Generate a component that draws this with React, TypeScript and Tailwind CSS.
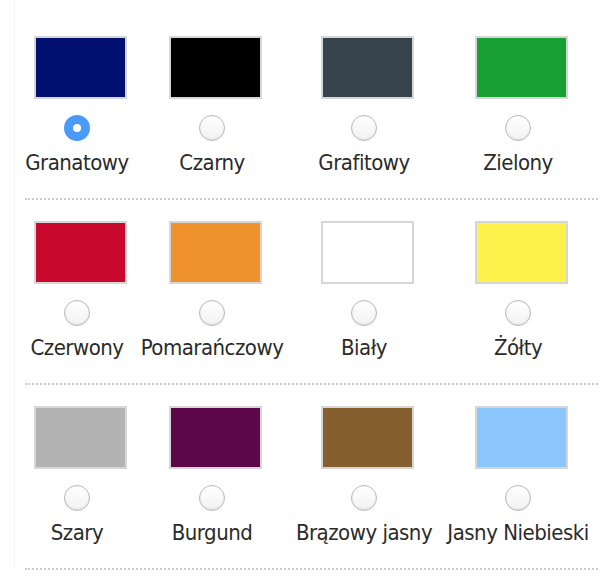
import React from 'react';

interface ColorOption {
  name: string;
  hex: string;
}

const rows: ColorOption[][] = [
  [
    { name: 'Granatowy', hex: '#021070' },
    { name: 'Czarny', hex: '#000000' },
    { name: 'Grafitowy', hex: '#36434d' },
    { name: 'Zielony', hex: '#19a035' },
  ],
  [
    { name: 'Czerwony', hex: '#c8092d' },
    { name: 'Pomarańczowy', hex: '#f0922b' },
    { name: 'Biały', hex: '#ffffff' },
    { name: 'Żółty', hex: '#fff14c' },
  ],
  [
    { name: 'Szary', hex: '#b3b3b3' },
    { name: 'Burgund', hex: '#5d074b' },
    { name: 'Brązowy jasny', hex: '#865f2f' },
    { name: 'Jasny Niebieski', hex: '#8bc6fd' },
  ],
];

function Radio({ checked }: { checked: boolean }) {
  if (checked) {
    return (
      <span className="flex h-[26px] w-[26px] items-center justify-center rounded-full bg-[#4a9bf7]">
        <span className="h-[8px] w-[8px] rounded-full bg-white" />
      </span>
    );
  }
  return (
    <span className="block h-[26px] w-[26px] rounded-full border border-[#b8b8b8] bg-gradient-to-b from-white to-[#f2f2f2] shadow-[inset_0_-1px_2px_rgba(0,0,0,0.08)]" />
  );
}

export default function App() {
  return (
    <div className="min-h-[580px] w-[612px] bg-white font-['DejaVu_Sans_Condensed','DejaVu_Sans',sans-serif] text-[#2b2b2b]">
      <div className="ml-[14px] border-l border-[#f4f4f4] pt-[36px]">
        {rows.map((row, ri) => (
          <div key={ri} className={ri === 0 ? '' : 'pt-[21px]'}>
            <div className="-ml-[4px] grid grid-cols-[132px_138px_166px_142px]">
              {row.map((c, ci) => (
                <div key={c.name} className="flex flex-col items-center">
                  <div className="flex w-full justify-center pl-[7px]">
                    <div
                      className="h-[63px] w-[93px] border-2 border-[#d6d6d6]"
                      style={{ backgroundColor: c.hex }}
                    />
                  </div>
                  <div className="mt-[16px]">
                    <Radio checked={ri === 0 && ci === 0} />
                  </div>
                  <div className="mt-[7px] whitespace-nowrap text-[22px] leading-[30px] tracking-[-0.5px]">
                    {c.name}
                  </div>
                </div>
              ))}
            </div>
            <div className="ml-[10px] mt-[20px] w-[573px] border-b-2 border-dotted border-[#cccccc]" />
          </div>
        ))}
      </div>
    </div>
  );
}
